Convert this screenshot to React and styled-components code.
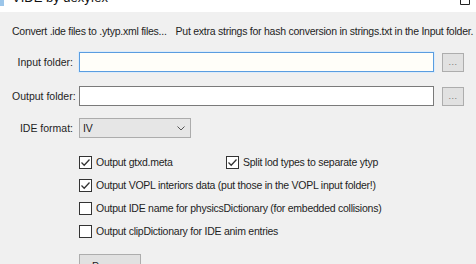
import React from 'react'
import styled, { createGlobalStyle } from 'styled-components'

const Global = createGlobalStyle`
  html, body {
    margin: 0;
    padding: 0;
    background: #f0f0f0;
  }
  * { box-sizing: border-box; }
`

const Window = styled.div`
  width: 476px;
  height: 264px;
  overflow: hidden;
  background: #f0f0f0;
  font-family: "Liberation Sans", Arial, sans-serif;
  font-size: 10.5px;
  letter-spacing: -0.25px;
  color: #1e1e1e;
`

const TitleBar = styled.div`
  height: 12px;
  background: #fff;
  overflow: hidden;
  display: flex;
  align-items: flex-start;
  padding: 0 6px 0 0;
`

const AppIcon = styled.div`
  width: 4px;
  height: 6px;
  background: #9cc6ea;
`

const TitleText = styled.span`
  margin: -10px 0 0 8px;
  font-size: 13px;
  line-height: 16px;
  letter-spacing: 0;
  color: #111;
  flex: 1;
`

const Body = styled.div`
  padding: 12px 0 0 12px;
`

const Intro = styled.div`
  line-height: 14px;
  white-space: nowrap;
`

const Gap = styled.span`
  display: inline-block;
  width: 9px;
`

const FieldRow = styled.div`
  display: flex;
  align-items: center;
  margin-top: ${p => p.$top}px;
`

const Label = styled.div`
  width: 61px;
  text-align: right;
  margin-right: 6px;
  white-space: nowrap;
  letter-spacing: 0;
`

const TextBox = styled.div`
  width: 355px;
  height: 20px;
  background: ${p => (p.$focused ? '#fffef9' : '#fff')};
  border: 1px solid ${p => (p.$focused ? '#5a9de0' : '#7a7a7a')};
  box-shadow: ${p => (p.$focused ? '0 0 0 1px #dcecfb' : 'none')};
`

const BrowseButton = styled.div`
  width: 22px;
  height: 19px;
  margin-left: 8px;
  background: #e1e1e1;
  border: 1px solid #adadad;
  color: #777;
  font-size: 9px;
  letter-spacing: 0.5px;
  display: flex;
  align-items: center;
  justify-content: center;
`

const Select = styled.div`
  width: 112px;
  height: 20px;
  background: #e6e6e6;
  border: 1px solid #acacac;
  display: flex;
  align-items: center;
  justify-content: space-between;
  padding: 0 5px 0 3px;
  color: #222;
`

const Checks = styled.div`
  display: flex;
  flex-direction: column;
  gap: 7px;
  margin: 16px 0 0 67px;
`

const CheckRow = styled.div`
  display: flex;
  align-items: center;
  height: 16px;
`

const CheckItem = styled.label`
  display: flex;
  align-items: center;
  width: ${p => (p.$width ? `${p.$width}px` : 'auto')};
  white-space: nowrap;
`

const Box = styled.span`
  width: 13px;
  height: 13px;
  border: 1px solid #333;
  background: #fff;
  margin-right: 4px;
  display: flex;
  align-items: center;
  justify-content: center;
  flex-shrink: 0;
`

const ProcessButton = styled.div`
  margin: 15px 0 0 67px;
  width: 62px;
  height: 23px;
  background: #e1e1e1;
  border: 1px solid #adadad;
  display: flex;
  align-items: center;
  justify-content: center;
`

const Check = ({ checked, children, width }) => (
  <CheckItem $width={width}>
    <Box>
      {checked && (
        <svg width="11" height="11" viewBox="0 0 11 11">
          <path d="M1.5 5.5 L4.2 8.2 L9.5 2.5" fill="none" stroke="#333" strokeWidth="1.3" />
        </svg>
      )}
    </Box>
    {children}
  </CheckItem>
)

export default function App() {
  return (
    <Window>
      <Global />
      <TitleBar>
        <AppIcon />
        <TitleText>VIDE by dexyfex</TitleText>
        <svg width="10" height="5" viewBox="0 0 10 5">
          <path d="M0.5 0 V4.5 H9.5 V0" fill="none" stroke="#222" strokeWidth="1" />
        </svg>
      </TitleBar>
      <Body>
        <Intro>
          Convert .ide files to .ytyp.xml files...<Gap />Put extra strings for hash conversion in strings.txt in the Input folder.
        </Intro>
        <FieldRow $top={14}>
          <Label>Input folder:</Label>
          <TextBox $focused />
          <BrowseButton>...</BrowseButton>
        </FieldRow>
        <FieldRow $top={14}>
          <Label>Output folder:</Label>
          <TextBox />
          <BrowseButton>...</BrowseButton>
        </FieldRow>
        <FieldRow $top={12}>
          <Label>IDE format:</Label>
          <Select>
            <span>IV</span>
            <svg width="8" height="5" viewBox="0 0 8 5">
              <path d="M0.5 0.5 L4 4 L7.5 0.5" fill="none" stroke="#555" strokeWidth="1" />
            </svg>
          </Select>
        </FieldRow>
        <Checks>
          <CheckRow>
            <Check checked width={147}>Output gtxd.meta</Check>
            <Check checked>Split lod types to separate ytyp</Check>
          </CheckRow>
          <CheckRow>
            <Check checked>Output VOPL interiors data (put those in the VOPL input folder!)</Check>
          </CheckRow>
          <CheckRow>
            <Check>Output IDE name for physicsDictionary (for embedded collisions)</Check>
          </CheckRow>
          <CheckRow>
            <Check>Output clipDictionary for IDE anim entries</Check>
          </CheckRow>
        </Checks>
        <ProcessButton>Process</ProcessButton>
      </Body>
    </Window>
  )
}
